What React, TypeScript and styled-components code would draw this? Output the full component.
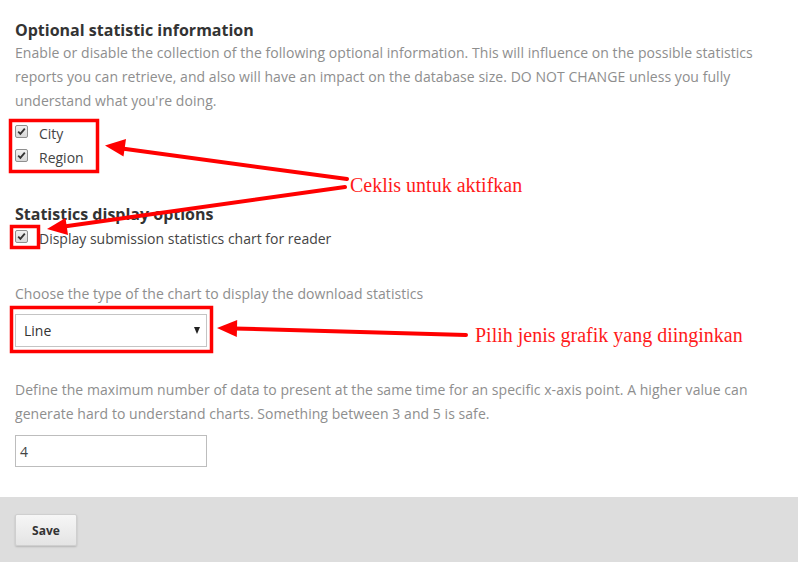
import React from "react";
import styled, { createGlobalStyle } from "styled-components";

const GlobalStyle = createGlobalStyle`
  html, body {
    margin: 0;
    padding: 0;
    background: #fff;
  }
  body {
    font-family: "Open Sans", "Noto Sans", sans-serif;
    color: #333;
  }
`;

const Page = styled.div`
  position: relative;
  width: 798px;
  height: 562px;
  overflow: hidden;
  display: flex;
  flex-direction: column;
`;

const Content = styled.div`
  padding: 20px 15px 0;
  flex: 1;
`;

const Heading = styled.h3<{ $gap?: number }>`
  margin: ${({ $gap }) => $gap ?? 0}px 0 0;
  font-size: 16px;
  line-height: 20px;
  font-weight: 700;
  color: #333;
`;

const Help = styled.p<{ $gap?: number }>`
  margin: ${({ $gap }) => $gap ?? 1}px 0 0;
  font-size: 14px;
  line-height: 24px;
  letter-spacing: 0.05px;
  color: #8e8e8e;
  max-width: 775px;
`;

const CheckList = styled.div<{ $gap?: number }>`
  margin-top: ${({ $gap }) => $gap ?? 8}px;
  display: flex;
  flex-direction: column;
`;

const CheckRow = styled.label`
  display: flex;
  align-items: center;
  height: 24px;
  font-size: 14px;
  color: #444;
  gap: 11px;
`;

const Box = styled.span`
  width: 11px;
  height: 11px;
  border: 1px solid #8f8f8f;
  border-radius: 2px;
  background: linear-gradient(#f0f0f0, #d8d8d8);
  display: flex;
  align-items: center;
  justify-content: center;
  margin-top: -4px;
`;

const Checkbox = () => (
  <Box>
    <svg width="9" height="9" viewBox="0 0 9 9">
      <path d="M1.2 4.6 L3.4 6.9 L7.8 1.6" fill="none" stroke="#333" strokeWidth="1.8" />
    </svg>
  </Box>
);

const SelectBox = styled.div`
  margin-top: 8px;
  width: 192px;
  height: 33px;
  box-sizing: border-box;
  border: 1px solid #c4c4c4;
  display: flex;
  align-items: center;
  justify-content: space-between;
  padding: 0 6px 0 8px;
  font-size: 14px;
  color: #333;
  background: #fff;
`;

const Caret = styled.span`
  width: 0;
  height: 0;
  border-left: 3.5px solid transparent;
  border-right: 3.5px solid transparent;
  border-top: 7px solid #222;
`;

const TextInput = styled.div`
  margin-top: 9px;
  width: 192px;
  height: 32px;
  box-sizing: border-box;
  border: 1px solid #bdbdbd;
  padding: 0 4px;
  display: flex;
  align-items: center;
  font-size: 14px;
  color: #444;
`;

const Footer = styled.div`
  background: #dddddd;
  height: 65px;
  padding: 17px 15px 0;
  box-sizing: border-box;
`;

const SaveButton = styled.button`
  width: 62px;
  height: 32px;
  border: 1px solid #cfcfcf;
  border-radius: 2px;
  background: linear-gradient(#f6f6f6, #e4e4e4);
  box-shadow: 0 1px 2px rgba(0, 0, 0, 0.18);
  font-family: "Open Sans", "Noto Sans", sans-serif;
  font-size: 12px;
  font-weight: 700;
  color: #333;
`;

const Overlay = styled.svg`
  position: absolute;
  inset: 0;
  pointer-events: none;
`;

const Note = styled.span<{ $x: number; $y: number }>`
  position: absolute;
  left: ${({ $x }) => $x}px;
  top: ${({ $y }) => $y}px;
  font-family: "Liberation Serif", "Times New Roman", serif;
  font-size: 20px;
  line-height: 22px;
  color: #ff1a1a;
  white-space: nowrap;
`;

const RED = "#ff0000";

const App = () => {
  return (
    <Page>
      <GlobalStyle />
      <Content>
        <Heading>Optional statistic information</Heading>
        <Help>
          Enable or disable the collection of the following optional information. This will influence on the possible statistics
          reports you can retrieve, and also will have an impact on the database size. DO NOT CHANGE unless you fully
          understand what you're doing.
        </Help>
        <CheckList>
          <CheckRow>
            <Checkbox />
            City
          </CheckRow>
          <CheckRow>
            <Checkbox />
            Region
          </CheckRow>
        </CheckList>

        <Heading $gap={35}>Statistics display options</Heading>
        <CheckList $gap={2}>
          <CheckRow>
            <Checkbox />
            Display submission statistics chart for reader
          </CheckRow>
        </CheckList>

        <Help $gap={32}>Choose the type of the chart to display the download statistics</Help>
        <SelectBox>
          Line
          <Caret />
        </SelectBox>

        <Help $gap={31}>
          Define the maximum number of data to present at the same time for an specific x-axis point. A higher value can
          generate hard to understand charts. Something between 3 and 5 is safe.
        </Help>
        <TextInput>4</TextInput>
      </Content>
      <Footer>
        <SaveButton>Save</SaveButton>
      </Footer>

      <Overlay width="798" height="562" viewBox="0 0 798 562">
        <g fill="none" stroke={RED} strokeWidth="3.5">
          <rect x="10.5" y="120.5" width="87" height="51" />
          <rect x="11.5" y="226.5" width="27" height="21" />
          <rect x="11.5" y="307.5" width="200" height="44" />
        </g>
        <g stroke={RED} strokeWidth="4" strokeLinecap="round">
          <line x1="122" y1="148.5" x2="347" y2="179" />
          <line x1="64" y1="226.5" x2="345" y2="187" />
          <line x1="234" y1="328.5" x2="466" y2="335" />
        </g>
        <g fill={RED}>
          <polygon points="105,145.5 126,139 123.5,156.5" />
          <polygon points="47,229 65.5,218 68,235" />
          <polygon points="217,328 237.2,320 236.8,337" />
        </g>
      </Overlay>
      <Note $x={350} $y={174}>Ceklis untuk aktifkan</Note>
      <Note $x={475} $y={324}>Pilih jenis grafik yang diinginkan</Note>
    </Page>
  );
};

export default App;
